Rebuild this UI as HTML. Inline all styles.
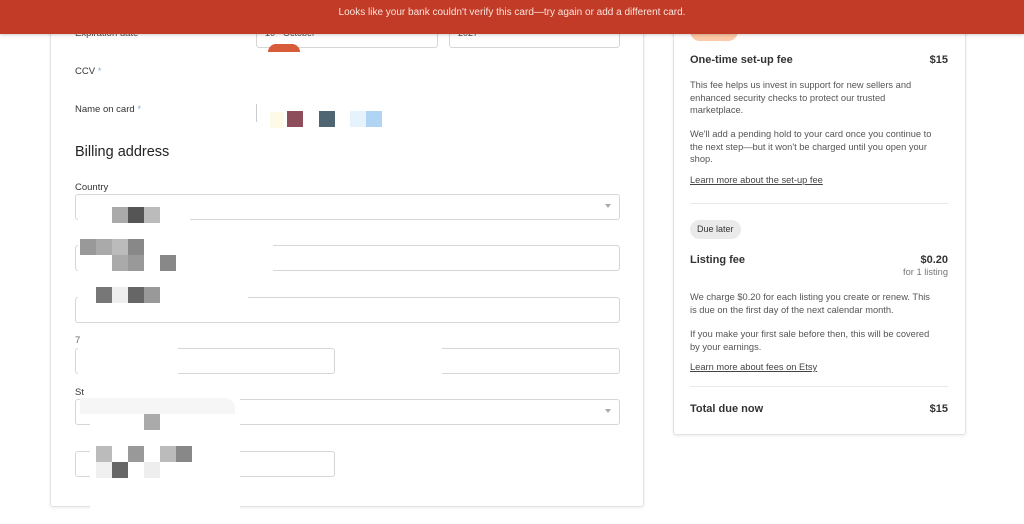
<!DOCTYPE html>
<html><head><style>
body{margin:0;width:1024px;height:524px;background:#fff;font-family:"Liberation Sans",sans-serif;position:relative;overflow:hidden;color:#222}
.a{position:absolute}
.card{border:1px solid #e2e2e2;border-radius:3px;box-shadow:0 1px 3px rgba(0,0,0,.08);background:#fff}
.in{position:absolute;border:1px solid #d6d6d6;border-radius:3px;height:24px;background:#fff}
.lbl{position:absolute;font-size:9.5px;color:#333}
.px{position:absolute;width:16px;height:16px}
.sm{font-size:9.3px;color:#555;line-height:12.5px;white-space:nowrap}
.arrow{position:absolute;right:8px;top:9px;width:0;height:0;border-left:3px solid transparent;border-right:3px solid transparent;border-top:4px solid #aaa}
</style></head><body>
<div class="a card" style="left:50px;top:-10px;width:592px;height:515px"></div>
<div class="a card" style="left:673px;top:-10px;width:291px;height:443px"></div>

<div class="in" style="left:256px;top:22px;width:180px"></div>
<div class="in" style="left:449px;top:22px;width:169px"></div>
<div class="a" style="left:268px;top:44px;width:32px;height:8px;border-radius:16px 16px 0 0;background:#d95c3a"></div>
<div class="lbl" style="left:75px;top:66px">CCV <span style="color:#8ad">*</span></div>
<div class="lbl" style="left:75px;top:104px">Name on card <span style="color:#8ad">*</span></div>
<div class="a" style="left:256px;top:104px;width:1px;height:18px;background:#ccc"></div>
<div class="px" style="left:270px;top:112px;background:#fdfbe8;width:14px"></div>
<div class="px" style="left:287px;top:111px;background:#8e4d5a"></div>
<div class="px" style="left:319px;top:111px;background:#4f6571"></div>
<div class="px" style="left:350px;top:111px;background:#e6f2fc"></div>
<div class="px" style="left:366px;top:111px;background:#b0d4f3"></div>
<div class="a" style="left:75px;top:144px;font-size:14.5px;color:#222">Billing address</div>

<div class="in" style="left:75px;top:194px;width:543px"><div class="arrow"></div></div>
<div class="in" style="left:75px;top:245px;width:543px"></div>
<div class="in" style="left:75px;top:297px;width:543px"></div>
<div class="in" style="left:75px;top:348px;width:258px"></div>
<div class="in" style="left:350px;top:348px;width:268px"></div>
<div class="in" style="left:75px;top:399px;width:543px"><div class="arrow"></div></div>
<div class="in" style="left:75px;top:451px;width:258px"></div>
<!-- white redaction areas -->
<div class="a" style="left:78px;top:196px;width:112px;height:47px;background:#fff"></div>
<div class="a" style="left:78px;top:235px;width:195px;height:42px;background:#fff"></div>
<div class="a" style="left:78px;top:280px;width:170px;height:38px;background:#fff"></div>
<div class="a" style="left:78px;top:330px;width:100px;height:50px;background:#fff"></div>
<div class="a" style="left:350px;top:340px;width:92px;height:40px;background:#fff"></div>
<div class="a" style="left:90px;top:395px;width:150px;height:115px;background:#fff"></div>
<div class="a" style="left:80px;top:398px;width:155px;height:16px;background:#f6f6f6;border-radius:0 10px 0 0"></div>
<div class="lbl" style="left:75px;top:182px">Country</div>
<div class="lbl" style="left:75px;top:335px;color:#666">7</div>
<div class="lbl" style="left:75px;top:387px">St</div>

<div class="px" style="left:112px;top:207px;background:#aaa"></div>
<div class="px" style="left:128px;top:207px;background:#555"></div>
<div class="px" style="left:144px;top:207px;background:#bbb"></div>
<div class="px" style="left:80px;top:239px;background:#999"></div>
<div class="px" style="left:96px;top:239px;background:#aaa"></div>
<div class="px" style="left:112px;top:239px;background:#bbb"></div>
<div class="px" style="left:128px;top:239px;background:#888"></div>
<div class="px" style="left:112px;top:255px;background:#aaa"></div>
<div class="px" style="left:128px;top:255px;background:#999"></div>
<div class="px" style="left:160px;top:255px;background:#888"></div>
<div class="px" style="left:96px;top:287px;background:#777"></div>
<div class="px" style="left:112px;top:287px;background:#eee"></div>
<div class="px" style="left:128px;top:287px;background:#666"></div>
<div class="px" style="left:144px;top:287px;background:#999"></div>
<div class="px" style="left:144px;top:414px;background:#aaa"></div>
<div class="px" style="left:96px;top:446px;background:#bbb"></div>
<div class="px" style="left:128px;top:446px;background:#999"></div>
<div class="px" style="left:160px;top:446px;background:#bbb"></div>
<div class="px" style="left:176px;top:446px;background:#888"></div>
<div class="px" style="left:96px;top:462px;background:#f0f0f0"></div>
<div class="px" style="left:112px;top:462px;background:#666"></div>
<div class="px" style="left:144px;top:462px;background:#eee"></div>

<!-- right -->
<div class="a" style="left:690px;top:28px;width:48px;height:13px;border-radius:0 0 10px 10px;background:#fdc9a6"></div>
<div class="a" style="left:690px;top:54px;font-size:11px;font-weight:bold;color:#333">One-time set-up fee</div>
<div class="a" style="left:690px;top:54px;width:258px;text-align:right;font-size:11px;font-weight:bold;color:#333">$15</div>
<div class="a sm" style="left:690px;top:79px">This fee helps us invest in support for new sellers and<br>enhanced security checks to protect our trusted<br>marketplace.</div>
<div class="a sm" style="left:690px;top:128px">We'll add a pending hold to your card once you continue to<br>the next step—but it won't be charged until you open your<br>shop.</div>
<div class="a sm" style="left:690px;top:174px;text-decoration:underline;color:#444">Learn more about the set-up fee</div>
<div class="a" style="left:690px;top:203px;width:258px;height:1px;background:#e8e8e8"></div>
<div class="a" style="left:690px;top:220px;padding:0 7px;height:19px;line-height:19px;border-radius:10px;background:#eaeaea;font-size:9px;color:#333">Due later</div>
<div class="a" style="left:690px;top:254px;font-size:11px;font-weight:bold;color:#333">Listing fee</div>
<div class="a" style="left:690px;top:254px;width:258px;text-align:right;font-size:11px;font-weight:bold;color:#333">$0.20</div>
<div class="a sm" style="left:690px;top:266px;width:258px;text-align:right;color:#777">for 1 listing</div>
<div class="a sm" style="left:690px;top:291px">We charge $0.20 for each listing you create or renew. This<br>is due on the first day of the next calendar month.</div>
<div class="a sm" style="left:690px;top:328px">If you make your first sale before then, this will be covered<br>by your earnings.</div>
<div class="a sm" style="left:690px;top:361px;text-decoration:underline;color:#444">Learn more about fees on Etsy</div>
<div class="a" style="left:690px;top:386px;width:258px;height:1px;background:#e8e8e8"></div>
<div class="a" style="left:690px;top:403px;font-size:11px;font-weight:bold;color:#333">Total due now</div>
<div class="a" style="left:690px;top:403px;width:258px;text-align:right;font-size:11px;font-weight:bold;color:#333">$15</div>

<div class="a" style="left:0;top:0;width:1024px;height:34px;background:#c23b26;box-shadow:0 1px 3px rgba(0,0,0,.2)"></div>
<div class="lbl" style="left:75px;top:28px;color:#444;clip-path:inset(6px 0 0 0)">Expiration date</div>
<div class="a" style="left:265px;top:28px;font-size:9px;color:#444;clip-path:inset(6px 0 0 0)">10 - October</div>
<div class="a" style="left:458px;top:28px;font-size:9px;color:#444;clip-path:inset(6px 0 0 0)">2027</div>
<div class="a" style="left:0;top:7px;width:1024px;text-align:center;color:#fbe3dd;font-size:10px">Looks like your bank couldn't verify this card—try again or add a different card.</div>
</body></html>
